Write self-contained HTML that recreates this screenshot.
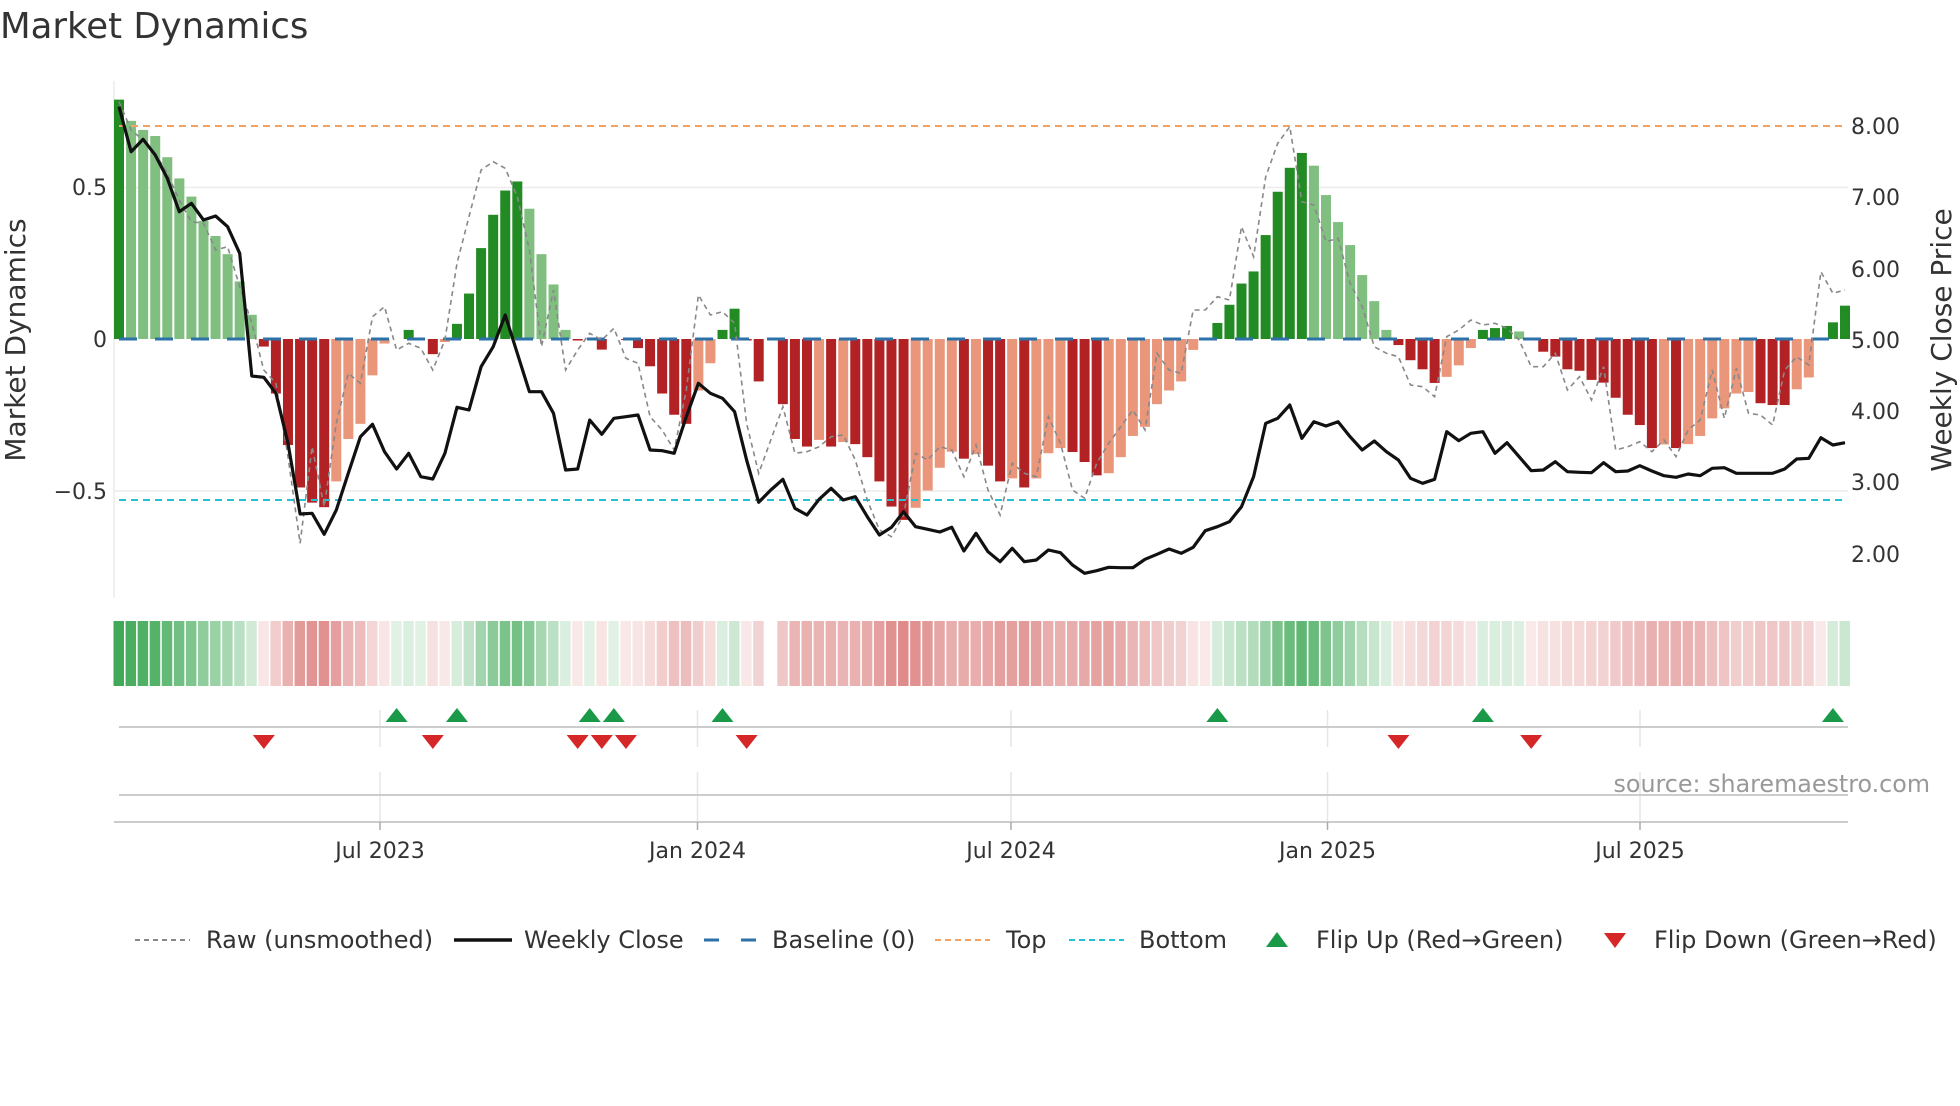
<!DOCTYPE html>
<html><head><meta charset="utf-8">
<style>
html,body{margin:0;padding:0;background:#fff;}
body{width:1960px;height:1102px;overflow:hidden;font-family:"DejaVu Sans","Liberation Sans",sans-serif;}
svg text{font-family:"DejaVu Sans","Liberation Sans",sans-serif;fill:#333;}
</style></head>
<body>
<svg id="s" width="1960" height="1102" xmlns="http://www.w3.org/2000/svg">
<text x="0" y="38" font-size="35.5">Market Dynamics</text>
<!-- grid -->
<line x1="114" y1="187.5" x2="1848" y2="187.5" stroke="#ececec" stroke-width="1.5"/>
<line x1="114" y1="491" x2="1848" y2="491" stroke="#ececec" stroke-width="1.5"/>
<line x1="114" y1="81" x2="114" y2="598" stroke="#ececec" stroke-width="1.5"/>
<g id="bars"></g>
<line x1="119" y1="126" x2="1845" y2="126" stroke="#f4a261" stroke-width="2" stroke-dasharray="7,5"/>
<line x1="119" y1="500" x2="1845" y2="500" stroke="#22c3d6" stroke-width="2" stroke-dasharray="7,5"/>
<line x1="119" y1="339" x2="1845" y2="339" stroke="#2c72a8" stroke-width="3" stroke-dasharray="18,18"/>
<polyline id="raw" fill="none" stroke="#888" stroke-width="1.6" stroke-dasharray="5,4"/>
<polyline id="close" fill="none" stroke="#111" stroke-width="3.2" stroke-linejoin="round"/>
<!-- left ticks -->
<g font-size="22" text-anchor="end">
<text x="107" y="195">0.5</text>
<text x="107" y="347">0</text>
<text x="107" y="499">−0.5</text>
</g>
<g font-size="22">
<text x="1851" y="134">8.00</text>
<text x="1851" y="205">7.00</text>
<text x="1851" y="277">6.00</text>
<text x="1851" y="348">5.00</text>
<text x="1851" y="419">4.00</text>
<text x="1851" y="490">3.00</text>
<text x="1851" y="562">2.00</text>
</g>
<text transform="translate(25,340) rotate(-90)" font-size="28" text-anchor="middle">Market Dynamics</text>
<text transform="translate(1951,340) rotate(-90)" font-size="28" text-anchor="middle">Weekly Close Price</text>
<g id="strip"></g>
<g stroke="#e6e6e6" stroke-width="1.5">
<line x1="380" y1="710" x2="380" y2="747"/><line x1="697.5" y1="710" x2="697.5" y2="747"/><line x1="1011" y1="710" x2="1011" y2="747"/><line x1="1327.5" y1="710" x2="1327.5" y2="747"/><line x1="1640" y1="710" x2="1640" y2="747"/>
<line x1="380" y1="772" x2="380" y2="822"/><line x1="697.5" y1="772" x2="697.5" y2="822"/><line x1="1011" y1="772" x2="1011" y2="822"/><line x1="1327.5" y1="772" x2="1327.5" y2="822"/><line x1="1640" y1="772" x2="1640" y2="822"/>
</g>
<line x1="119" y1="727" x2="1848" y2="727" stroke="#ccc" stroke-width="2"/>
<line x1="119" y1="795" x2="1848" y2="795" stroke="#ccc" stroke-width="2"/>
<line x1="114" y1="822" x2="1848" y2="822" stroke="#ccc" stroke-width="2"/>
<g stroke="#aaa" stroke-width="1.5">
<line x1="380" y1="822" x2="380" y2="830"/><line x1="697.5" y1="822" x2="697.5" y2="830"/><line x1="1011" y1="822" x2="1011" y2="830"/><line x1="1327.5" y1="822" x2="1327.5" y2="830"/><line x1="1640" y1="822" x2="1640" y2="830"/>
</g>
<g id="flips"></g>
<g font-size="22" text-anchor="middle">
<text x="380" y="858">Jul 2023</text>
<text x="697.5" y="858">Jan 2024</text>
<text x="1011" y="858">Jul 2024</text>
<text x="1327.5" y="858">Jan 2025</text>
<text x="1640" y="858">Jul 2025</text>
</g>
<text x="1930" y="792" font-size="23.8" text-anchor="end" style="fill:#999">source: sharemaestro.com</text>
<!-- legend -->
<line x1="135" y1="940" x2="190" y2="940" stroke="#888" stroke-width="2" stroke-dasharray="5,4"/>
<line x1="454" y1="940" x2="512" y2="940" stroke="#111" stroke-width="3.5"/>
<line x1="704" y1="940" x2="756" y2="940" stroke="#2c72a8" stroke-width="3" stroke-dasharray="15,22"/>
<line x1="935" y1="940" x2="990" y2="940" stroke="#f4a261" stroke-width="2" stroke-dasharray="6,4"/>
<line x1="1069" y1="940" x2="1124" y2="940" stroke="#22c3d6" stroke-width="2" stroke-dasharray="6,4"/>
<polygon points="1266,947 1288,947 1277,932" fill="#1a9a48"/>
<polygon points="1604,933 1626,933 1615,948" fill="#d62728"/>
<g font-size="24">
<text x="206" y="948">Raw (unsmoothed)</text>
<text x="524" y="948">Weekly Close</text>
<text x="772" y="948">Baseline (0)</text>
<text x="1006" y="948">Top</text>
<text x="1139" y="948">Bottom</text>
<text x="1316" y="948">Flip Up (Red→Green)</text>
<text x="1654" y="948">Flip Down (Green→Red)</text>
</g>
</svg>
<script>
var V=[.79,.72,.69,.67,.60,.53,.47,.39,.34,.28,.19,.08,-.025,-.18,-.35,-.49,-.54,-.555,-.47,-.33,-.28,-.12,-.015,0,.03,0,-.05,-.01,.05,.15,.30,.41,.49,.52,.43,.28,.18,.03,-.005,0,-.035,0,-.003,-.03,-.09,-.18,-.25,-.28,-.17,-.08,.03,.10,-.005,-.14,null,-.215,-.33,-.355,-.333,-.355,-.34,-.347,-.39,-.47,-.553,-.597,-.557,-.50,-.425,-.372,-.395,-.38,-.418,-.47,-.46,-.49,-.46,-.377,-.36,-.373,-.406,-.45,-.443,-.39,-.32,-.29,-.215,-.17,-.14,-.036,0,.053,.113,.183,.223,.343,.486,.565,.614,.572,.475,.386,.31,.211,.125,.03,-.02,-.07,-.10,-.145,-.125,-.087,-.03,.03,.036,.043,.025,0,-.042,-.058,-.1,-.105,-.135,-.144,-.194,-.25,-.284,-.36,-.348,-.36,-.347,-.32,-.262,-.229,-.18,-.175,-.212,-.218,-.218,-.166,-.127,0,.055,.11];
var C=[50,185,148,195,265,365,340,390,378,410,490,858,862,910,1060,1272,1270,1333,1260,1150,1040,1003,1085,1137,1090,1160,1167,1090,952,960,830,770,675,790,905,905,970,1140,1137,990,1033,985,980,975,1080,1082,1090,980,880,910,925,965,1110,1237,1200,1168,1255,1275,1228,1195,1230,1220,1280,1335,1312,1265,1310,1318,1326,1312,1383,1330,1385,1415,1375,1415,1410,1380,1388,1425,1450,1442,1432,1433,1433,1408,1393,1377,1390,1372,1322,1310,1295,1250,1160,1000,985,945,1045,995,1008,995,1040,1080,1053,1085,1110,1165,1180,1168,1025,1052,1030,1025,1090,1058,1100,1142,1140,1115,1145,1147,1148,1118,1145,1143,1127,1143,1157,1162,1152,1157,1135,1133,1150,1150,1150,1150,1137,1107,1105,1043,1065,1058];
var R=[35,120,150,190,250,330,395,400,480,470,590,700,840,880,1100,1360,1070,1250,1000,850,880,680,650,780,760,775,840,750,520,380,240,215,235,320,480,770,600,840,780,730,750,715,805,820,980,1020,1080,900,615,675,665,700,1000,1150,1050,950,1090,1085,1070,1040,1035,1110,1230,1320,1340,1275,1090,1110,1070,1080,1160,1065,1200,1275,1120,1150,1160,980,1060,1200,1225,1120,1060,1010,960,1020,790,840,850,660,660,620,630,410,500,260,160,110,335,345,455,445,580,650,770,790,800,885,890,920,740,720,690,705,700,715,750,830,830,790,900,860,930,830,1080,1070,1055,1085,1050,1100,1020,990,840,985,835,970,975,1005,840,800,825,545,610,600];
var ns="http://www.w3.org/2000/svg";
function el(t,a,p){var e=document.createElementNS(ns,t);for(var k in a)e.setAttribute(k,a[k]);p.appendChild(e);return e;}
var bars=document.getElementById('bars'),strip=document.getElementById('strip'),fl=document.getElementById('flips');
var X=function(i){return 119+i*12.07;};
var S=303;
var ups=[23,28,39,41,50,91,113,142],downs=[12,26,38,40,42,52,106,117];
var state=1;
for(var i=0;i<144;i++){
 if(ups.indexOf(i)>=0)state=1; if(downs.indexOf(i)>=0)state=-1;
 var v=V[i]; if(v===null)continue;
 var prev=i>0&&V[i-1]!==null?V[i-1]:0;
 var h=Math.abs(v)*S;
 if(h>0.5){
  var dark=Math.abs(v)>=Math.abs(prev);
  var col=v>0?(dark?'#238b23':'#80bf80'):(dark?'#b22225':'#e9967a');
  if(v>0&&i>0&&V[i-1]!==null&&V[i-1]<=0)col='#238b23';
  if(v<0&&i>0&&V[i-1]!==null&&V[i-1]>=0)col='#b22225';
  el('rect',{x:X(i)-5,y:v>0?339-h:339,width:10,height:h,fill:col},bars);
 }
 var a=Math.min(0.9,0.14+Math.abs(v)*1.0);
 var sc=state>0?'rgba(44,160,70,'+a+')':'rgba(205,80,78,'+(a*0.9)+')';
 el('rect',{x:X(i)-5.5,y:621,width:10.5,height:65,fill:sc},strip);
}
var pc=[],pr=[];
for(var i=0;i<144;i++){pc.push(X(i).toFixed(1)+','+(90+C[i]/3).toFixed(1));pr.push(X(i).toFixed(1)+','+(90+R[i]/3).toFixed(1));}
document.getElementById('close').setAttribute('points',pc.join(' '));
document.getElementById('raw').setAttribute('points',pr.join(' '));
ups.forEach(function(i){var x=X(i);el('polygon',{points:(x-11)+',722 '+(x+11)+',722 '+x+',708',fill:'#1a9a48'},fl);});
downs.forEach(function(i){var x=X(i);el('polygon',{points:(x-11)+',735 '+(x+11)+',735 '+x+',749',fill:'#d62728'},fl);});
</script>
</body></html>
